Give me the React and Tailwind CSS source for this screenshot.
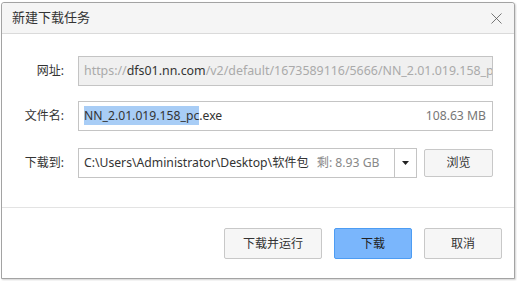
import { X } from 'lucide-react'

const font = { fontFamily: '"Noto Sans", "Noto Sans CJK SC", sans-serif' }

function Label({ children }) {
  return <div className="w-[62px] shrink-0 text-right text-[12px] text-[#333]">{children}</div>
}

export default function App() {
  return (
    <div className="h-[281px] w-[517px] overflow-hidden bg-white pl-px pt-[2px]" style={font}>
      <div className="flex h-[277px] w-[514px] flex-col rounded-t-[3px] border border-[#a3a3a3] bg-white shadow-[1px_1px_2px_rgba(0,0,0,0.18)]">
        {/* 标题栏 */}
        <div className="flex h-[31px] shrink-0 items-center justify-between rounded-t-[3px] border-b border-[#dadada] bg-[#f5f5f5] pl-[10px] pr-[8px]">
          <span className="text-[13px] text-[#333]">新建下载任务</span>
          <X size={19} strokeWidth={1} className="text-[#555]" />
        </div>

        {/* 表单 */}
        <div className="h-[174px] shrink-0 border-b border-[#e3e3e3] pt-[22px]">
          <div className="flex items-center gap-[14px]">
            <Label>网址:</Label>
            <div className="flex h-[30px] w-[415px] items-center overflow-hidden whitespace-nowrap border border-[#c4c4c4] bg-[#f0f0f0] pl-[5px] text-[12.4px] text-[#aaa]">
              https://<span className="text-[#333]">dfs01.nn.com</span>/v2/default/1673589116/5666/NN_2.01.019.158_pc.exe
            </div>
          </div>

          <div className="mt-[15px] flex items-center gap-[14px]">
            <Label>文件名:</Label>
            <div className="flex h-[30px] w-[415px] items-center justify-between whitespace-nowrap border border-[#c4c4c4] bg-white pl-[5px] pr-[6px] text-[12.2px]">
              <span className="text-[#333]">
                <span className="bg-[#a8cdf6] py-[1px]">NN_2.01.019.158_pc</span>.exe
              </span>
              <span className="text-[#777]">108.63 MB</span>
            </div>
          </div>

          <div className="mt-[17px] flex items-center gap-[14px]">
            <Label>下载到:</Label>
            <div className="flex h-[30px] w-[339px] items-center border border-[#c4c4c4] bg-white">
              <div className="flex flex-1 items-center whitespace-nowrap pl-[5px] text-[12.2px] text-[#333]">
                C:\Users\Administrator\Desktop\软件包
                <span className="ml-[8px] text-[#888]">剩: 8.93 GB</span>
              </div>
              <div className="flex h-full w-[22px] items-center justify-center border-l border-[#c4c4c4]">
                <svg width="7" height="4" viewBox="0 0 7 4"><path d="M0 0h7L3.5 4z" fill="#222" /></svg>
              </div>
            </div>
            <button className="ml-[-7px] h-[28px] w-[69px] rounded-[2px] border border-[#c8c8c8] bg-[#f6f6f6] text-[12px] text-[#333]">浏览</button>
          </div>
        </div>

        {/* 按钮 */}
        <div className="flex justify-end gap-[12px] pr-[12px] pt-[20px]">
          <button className="h-[31px] w-[98px] rounded-[2px] border border-[#c8c8c8] bg-[#f6f6f6] text-[12px] text-[#333]">下载并运行</button>
          <button className="h-[31px] w-[78px] rounded-[2px] border border-[#4d9cf3] bg-[#7ab6fc] text-[12px] text-[#222]">下载</button>
          <button className="h-[31px] w-[78px] rounded-[2px] border border-[#c8c8c8] bg-[#f6f6f6] text-[12px] text-[#333]">取消</button>
        </div>
      </div>
    </div>
  )
}
